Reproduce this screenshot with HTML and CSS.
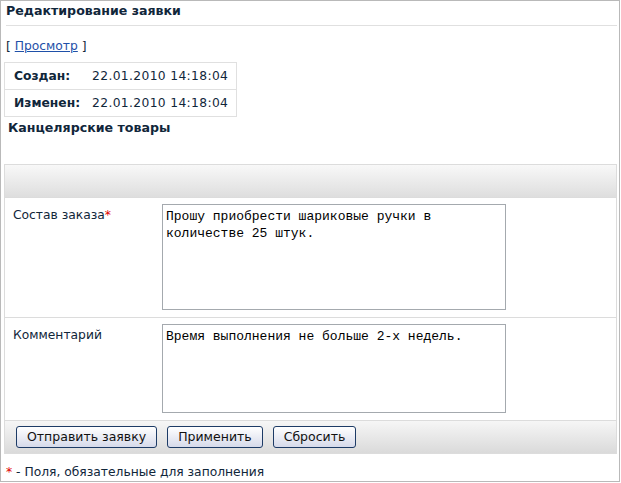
FILE: index.html
```html
<!DOCTYPE html>
<html lang="ru">
<head>
<meta charset="utf-8">
<title>Редактирование заявки</title>
<link rel="stylesheet" href="styles.css">
</head>
<body>
<div class="frame">
  <div class="page-title">Редактирование заявки</div>
  <div class="actions">[ <a href="#" class="link">Просмотр</a> ]</div>
  <table class="info">
    <tr><th>Создан:</th><td>22.01.2010 14:18:04</td></tr>
    <tr><th>Изменен:</th><td>22.01.2010 14:18:04</td></tr>
  </table>
  <div class="category">Канцелярские товары</div>
  <div class="form">
    <div class="form-head"></div>
    <div class="form-row">
      <div class="label">Состав заказа<span class="req">*</span></div>
      <textarea class="field field-tall">Прошу приобрести шариковые ручки в количестве 25 штук.</textarea>
    </div>
    <div class="form-row">
      <div class="label">Комментарий</div>
      <textarea class="field field-short">Время выполнения не больше 2-х недель.</textarea>
    </div>
    <div class="form-buttons">
      <button class="btn" type="button">Отправить заявку</button>
      <button class="btn" type="button">Применить</button>
      <button class="btn" type="button">Сбросить</button>
    </div>
  </div>
  <div class="note"><span class="req">*</span> - Поля, обязательные для заполнения</div>
</div>
</body>
</html>
```
FILE: styles.css
```css
html, body {
  margin: 0;
  padding: 0;
  background: #fff;
}
body {
  font-family: "DejaVu Sans", Verdana, sans-serif;
  font-size: 12.3px;
  color: #10263a;
}
.frame {
  box-sizing: border-box;
  width: 620px;
  height: 482px;
  border: 1px solid #b9b9b9;
  padding: 0 2px 0 3px;
}
.page-title {
  margin: 0 0 0 2px;
  height: 25px;
  padding-top: 2px;
  box-sizing: border-box;
  line-height: 16px;
  font-weight: bold;
  font-size: 12.6px;
  border-bottom: 1px solid #e0e0e0;
}
.actions {
  margin: 12px 0 0 2px;
  line-height: 16px;
  height: 16px;
}
.link {
  color: #1f50a8;
  text-decoration: underline;
}
.info {
  margin-top: 8px;
  border-collapse: collapse;
  border: 1px solid #e0e0e0;
}
.info th, .info td {
  height: 26px;
  border-bottom: 1px solid #e0e0e0;
  text-align: left;
  line-height: 16px;
}
.info th {
  font-weight: bold;
  padding: 0 0 0 9px;
}
.info td {
  padding: 0 8px 0 12px;
  letter-spacing: 0.35px;
}
.category {
  margin: 3px 0 0 4px;
  font-weight: bold;
  font-size: 12.6px;
  line-height: 16px;
  height: 16px;
}
.form {
  margin-top: 28px;
  width: 613px;
  box-sizing: border-box;
  border: 1px solid #dcdcdc;
}
.form-head {
  height: 32px;
  background: linear-gradient(#f8f8f8, #dedede);
  border-bottom: 1px solid #dcdcdc;
}
.form-row {
  display: flex;
  padding: 6px 0 7px;
  border-bottom: 1px solid #dcdcdc;
}
.label {
  width: 149px;
  padding: 3px 0 0 8px;
  line-height: 16px;
}
.req {
  color: #e00000;
}
.field {
  box-sizing: border-box;
  width: 344px;
  margin: 0;
  padding: 3px 3px 1px;
  border: 1px solid #a4a9ae;
  font-family: "Liberation Mono", "Courier New", monospace;
  font-size: 13px;
  line-height: 17px;
  color: #000;
  resize: none;
  overflow: hidden;
}
.field-tall { height: 106px; }
.field-short { height: 89px; }
.form-buttons {
  display: flex;
  gap: 10px;
  align-items: center;
  height: 32px;
  padding-left: 11px;
  background: linear-gradient(#f6f6f6, #dadada);
}
.btn {
  height: 22px;
  padding: 0 10px;
  margin: 0;
  border: 1px solid #1d3b66;
  border-radius: 3px;
  background: linear-gradient(#ffffff, #d6daea);
  font-family: "DejaVu Sans", Verdana, sans-serif;
  font-size: 12.5px;
  color: #111;
  line-height: 18px;
}
.note {
  margin: 10px 0 0 2px;
  line-height: 16px;
}
```
